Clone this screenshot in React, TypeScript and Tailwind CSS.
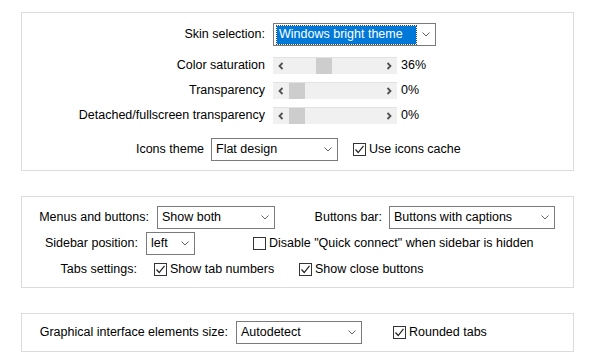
import React from "react";

const Chevron = () => (
  <svg width="8" height="5" viewBox="0 0 8 5" className="shrink-0">
    <polyline points="0.5,0.5 4,4 7.5,0.5" fill="none" stroke="#606060" strokeWidth="1" />
  </svg>
);

function Combo({ w, text, selected = false }: { w: string; text: string; selected?: boolean }) {
  return (
    <div className={`${w} h-[23px] border border-[#7a7a7a] bg-white flex items-center pr-[5px]`}>
      {selected ? (
        <div className="flex-1 h-[18px] ml-[3px] mr-[6px] bg-[#0078d7] text-white flex items-center pl-[2px] outline-1 outline-dotted outline-[#2a4a70]">
          {text}
        </div>
      ) : (
        <div className="flex-1 pl-[4px] whitespace-nowrap">{text}</div>
      )}
      <Chevron />
    </div>
  );
}

function Check({ label, checked }: { label: string; checked: boolean }) {
  return (
    <div className="flex items-center whitespace-nowrap">
      <div className="w-[13px] h-[13px] border border-[#333333] bg-white flex items-center justify-center">
        {checked && (
          <svg width="11" height="11" viewBox="0 0 11 11">
            <polyline points="1.5,5.5 4.2,8.5 9.5,1.8" fill="none" stroke="#222" strokeWidth="1.2" />
          </svg>
        )}
      </div>
      <span className="ml-[3px]">{label}</span>
    </div>
  );
}

function Slider({ offset, value }: { offset: string; value: string }) {
  return (
    <div className="flex items-center">
      <div className="w-[124px] h-[17px] bg-[#f0f0f0] border-t border-[#e2e2e2] flex items-center">
        <div className="w-[16px] h-full flex items-center justify-center">
          <svg width="6" height="8" viewBox="0 0 6 8">
            <polyline points="4.5,1 1.5,4 4.5,7" fill="none" stroke="#505050" strokeWidth="1.8" />
          </svg>
        </div>
        <div className="flex-1 h-full flex">
          <div className={`${offset} w-[16px] h-full bg-[#cdcdcd]`} />
        </div>
        <div className="w-[16px] h-full flex items-center justify-center">
          <svg width="6" height="8" viewBox="0 0 6 8">
            <polyline points="1.5,1 4.5,4 1.5,7" fill="none" stroke="#505050" strokeWidth="1.8" />
          </svg>
        </div>
      </div>
      <span className="ml-[4px]">{value}</span>
    </div>
  );
}

export default function App() {
  return (
    <div className="w-[600px] h-[356px] bg-white text-black text-[12.5px] leading-none pt-[12px] pl-[21px] font-['Liberation_Sans',Arial,sans-serif]">
      {/* Group 1 */}
      <div className="w-[553px] h-[159px] border border-[#dcdcdc] pt-[10px]">
        <div className="flex items-center h-[23px]">
          <div className="w-[243px] text-right">Skin selection:</div>
          <div className="ml-[8px]">
            <Combo w="w-[163px]" text="Windows bright theme" selected />
          </div>
        </div>
        <div className="flex items-center h-[17px] mt-[11px]">
          <div className="w-[243px] text-right">Color saturation</div>
          <div className="ml-[8px]">
            <Slider offset="ml-[27px]" value="36%" />
          </div>
        </div>
        <div className="flex items-center h-[17px] mt-[8px]">
          <div className="w-[243px] text-right">Transparency</div>
          <div className="ml-[8px]">
            <Slider offset="ml-0" value="0%" />
          </div>
        </div>
        <div className="flex items-center h-[17px] mt-[8px]">
          <div className="w-[243px] text-right">Detached/fullscreen transparency</div>
          <div className="ml-[8px]">
            <Slider offset="ml-0" value="0%" />
          </div>
        </div>
        <div className="flex items-center h-[23px] mt-[14px]">
          <div className="w-[182px] text-right">Icons theme</div>
          <div className="ml-[7px]">
            <Combo w="w-[127px]" text="Flat design" />
          </div>
          <div className="ml-[15px]">
            <Check label="Use icons cache" checked />
          </div>
        </div>
      </div>

      {/* Group 2 */}
      <div className="w-[553px] h-[92px] border border-[#dcdcdc] mt-[25px] pt-[9px]">
        <div className="flex items-center h-[23px]">
          <div className="w-[127px] text-right">Menus and buttons:</div>
          <div className="ml-[8px]">
            <Combo w="w-[118px]" text="Show both" />
          </div>
          <div className="w-[107px] text-right">Buttons bar:</div>
          <div className="ml-[7px]">
            <Combo w="w-[166px]" text="Buttons with captions" />
          </div>
        </div>
        <div className="flex items-center h-[23px] mt-[3px]">
          <div className="w-[116px] text-right">Sidebar position:</div>
          <div className="ml-[8px]">
            <Combo w="w-[49px]" text="left" />
          </div>
          <div className="ml-[58px]">
            <Check label={'Disable "Quick connect" when sidebar is hidden'} checked={false} />
          </div>
        </div>
        <div className="flex items-center h-[17px] mt-[6px]">
          <div className="w-[115px] text-right">Tabs settings:</div>
          <div className="ml-[17px] w-[145px]">
            <Check label="Show tab numbers" checked />
          </div>
          <Check label="Show close buttons" checked />
        </div>
      </div>

      {/* Group 3 */}
      <div className="w-[553px] h-[39px] border border-[#dcdcdc] mt-[25px] pt-[7px]">
        <div className="flex items-center h-[23px]">
          <div className="w-[206px] text-right">Graphical interface elements size:</div>
          <div className="ml-[8px]">
            <Combo w="w-[126px]" text="Autodetect" />
          </div>
          <div className="ml-[31px]">
            <Check label="Rounded tabs" checked />
          </div>
        </div>
      </div>
    </div>
  );
}
